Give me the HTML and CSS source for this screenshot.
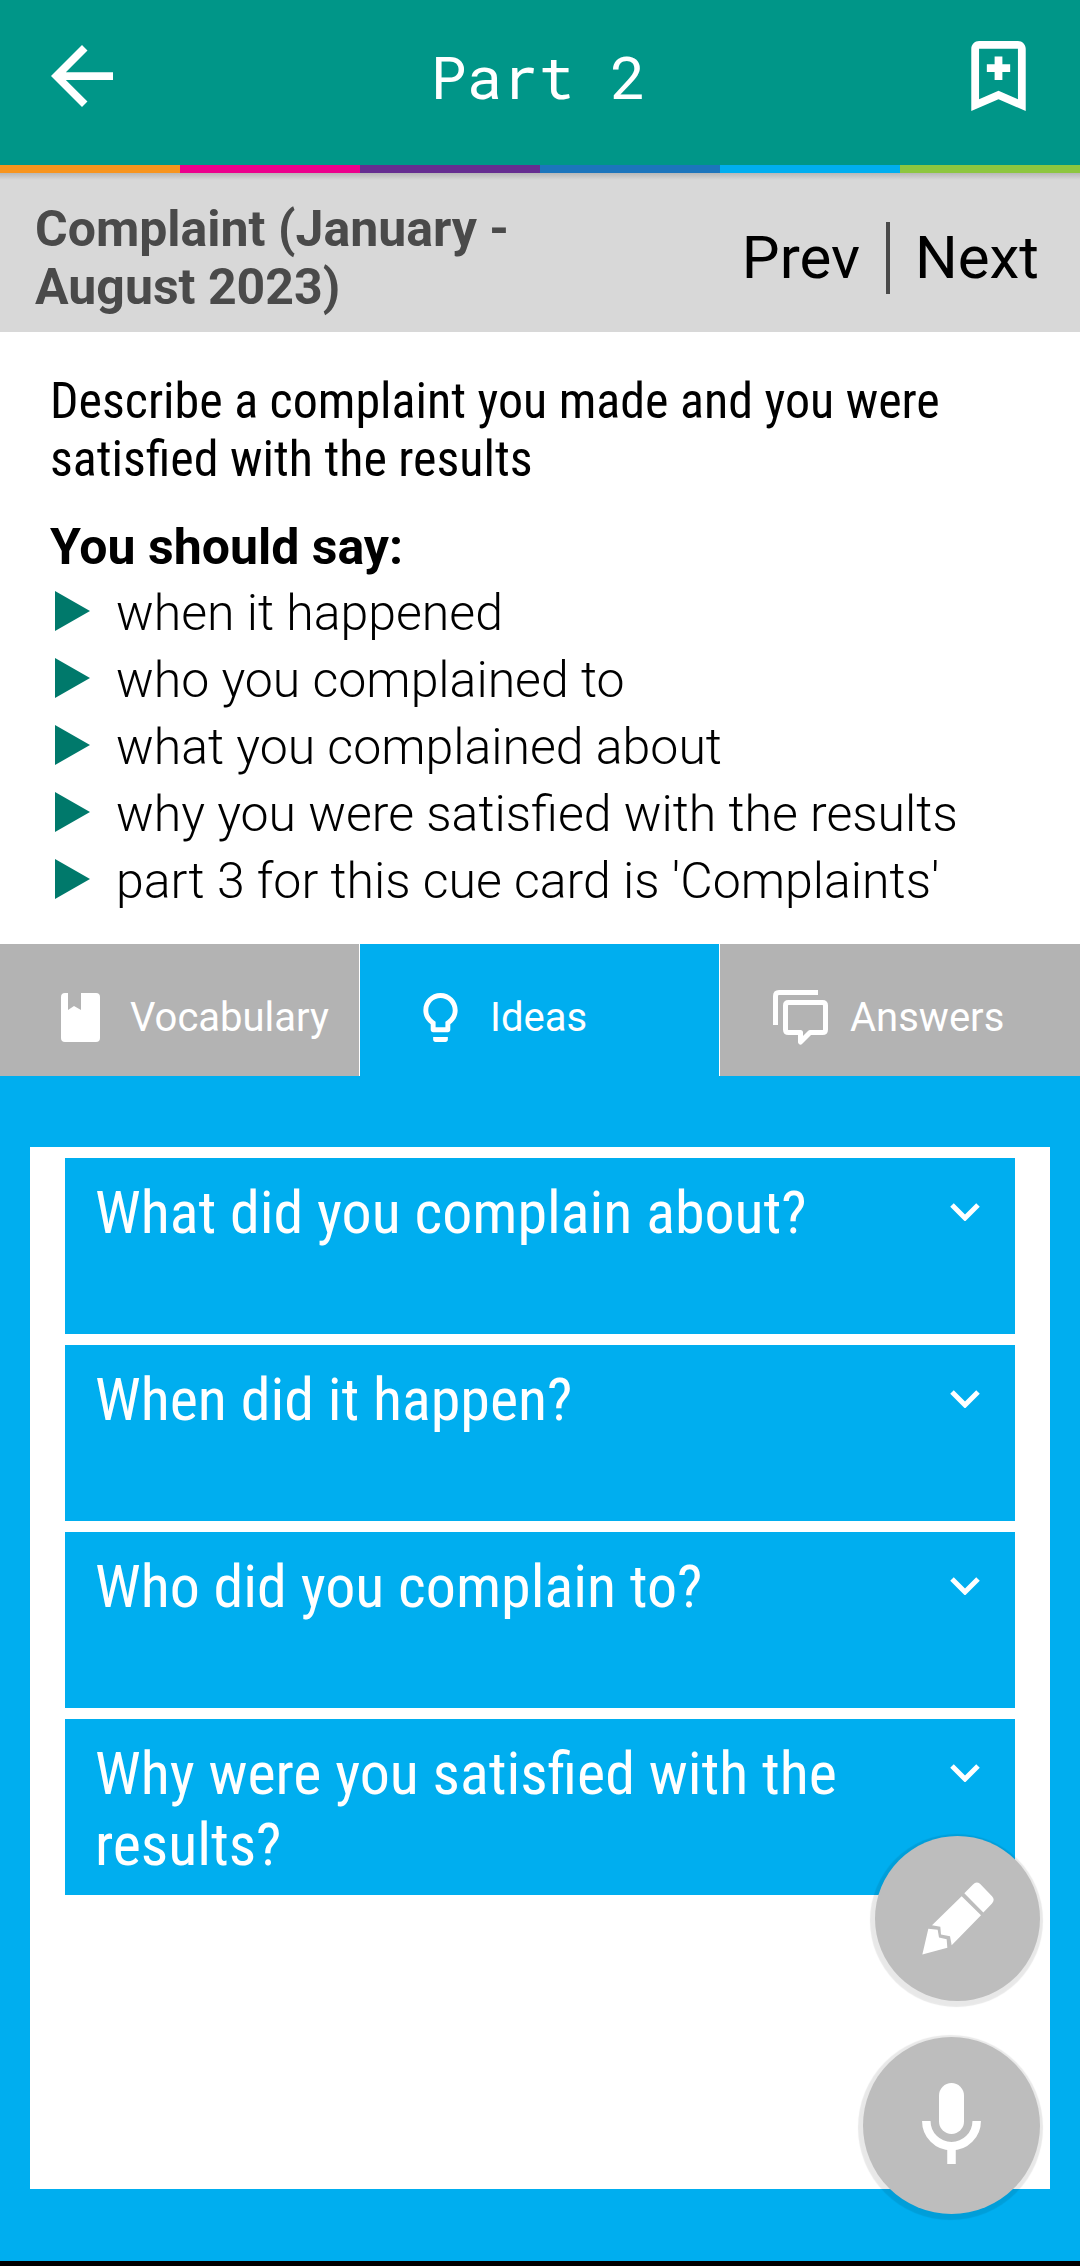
FILE: index.html
```html
<!DOCTYPE html>
<html lang="en">
<head>
<meta charset="utf-8">
<meta name="viewport" content="width=device-width, initial-scale=1">
<title>Part 2</title>
<link rel="stylesheet" href="styles.css">
</head>
<body>
<div class="app">
  <header class="topbar">
    <button class="icon-button" type="button" aria-label="Back">
      <svg width="62" height="62" viewBox="4 4 16 16" fill="currentColor"><path d="M20 11H7.83l5.59-5.59L12 4l-8 8 8 8 1.41-1.41L7.83 13H20v-2z"/></svg>
    </button>
    <h1 class="topbar-title">Part 2</h1>
    <button class="icon-button" type="button" aria-label="Add bookmark">
      <svg width="55" height="70" viewBox="5 3 14 18" fill="currentColor"><path d="M17 3H7c-1.100 0-2 .9-2 2v16l7-3 7 3V5c0-1.100-.9-2-2-2zm0 15l-5-2.180L7 18V5h10v13zM11 7h2v2h2v2h-2v2h-2v-2H9V9h2z"/></svg>
    </button>
  </header>
  <div class="stripes">
    <span class="orange"></span><span class="pink"></span><span class="purple"></span><span class="blue"></span><span class="sky"></span><span class="green"></span>
  </div>

  <section class="topic">
    <h2 class="topic-name">Complaint (January - August 2023)</h2>
    <nav class="pager">
      <a href="#prev">Prev</a>
      <a href="#next">Next</a>
    </nav>
  </section>

  <section class="cue">
    <p class="cue-task">Describe a complaint you made and you were satisfied with the results</p>
    <h3 class="cue-heading">You should say:</h3>
    <ul class="cue-list">
      <li>when it happened</li>
      <li>who you complained to</li>
      <li>what you complained about</li>
      <li>why you were satisfied with the results</li>
      <li>part 3 for this cue card is 'Complaints'</li>
    </ul>
  </section>

  <div class="tabs" role="tablist">
    <button class="tab" type="button" role="tab" aria-selected="false">
      <span class="tab-icon"><svg width="39" height="49" viewBox="0 0 39 49" fill="currentColor"><path d="M4 0h3v17l6-4 7 4V0h15q4 0 4 4v41q0 4-4 4H4q-4 0-4-4V4q0-4 4-4z"/></svg></span>
      Vocabulary
    </button>
    <button class="tab" type="button" role="tab" aria-selected="true">
      <span class="tab-icon"><svg width="35" height="49" viewBox="5 2 14 20" fill="currentColor"><path d="M9 21c0 .55.45 1 1 1h4c.55 0 1-.45 1-1v-1H9v1zm3-19C8.140 2 5 5.140 5 9c0 2.380 1.190 4.470 3 5.740V17c0 .55.45 1 1 1h6c.55 0 1-.45 1-1v-2.260c1.810-1.270 3-3.360 3-5.740 0-3.860-3.140-7-7-7zm2.850 11.100l-.85.6V16h-4v-2.300l-.85-.6C7.800 12.160 7 10.630 7 9c0-2.760 2.240-5 5-5s5 2.240 5 5c0 1.630-.8 3.160-2.150 4.100z"/></svg></span>
      Ideas
    </button>
    <button class="tab" type="button" role="tab" aria-selected="false">
      <span class="tab-icon"><svg width="55" height="55" viewBox="0 0 55 55" fill="none" stroke="currentColor" stroke-width="5"><path d="M2.500 35V6q0-3.500 3.500-3.500h39"/><path stroke-linejoin="round" d="M15.500 12.500h34q3 0 3 3v24q0 3-3 3H37l-9.500 9.500v-9.500h-12q-3 0-3-3v-24q0-3 3-3z"/></svg></span>
      Answers
    </button>
  </div>

  <main class="ideas" role="tabpanel">
    <div class="panel">
      <button class="idea" type="button" aria-expanded="false">
        <span>What did you complain about?</span>
        <svg class="chevron" viewBox="0 0 30 18"><path d="M2 2l13 13L28 2"/></svg>
      </button>
      <button class="idea" type="button" aria-expanded="false">
        <span>When did it happen?</span>
        <svg class="chevron" viewBox="0 0 30 18"><path d="M2 2l13 13L28 2"/></svg>
      </button>
      <button class="idea" type="button" aria-expanded="false">
        <span>Who did you complain to?</span>
        <svg class="chevron" viewBox="0 0 30 18"><path d="M2 2l13 13L28 2"/></svg>
      </button>
      <button class="idea" type="button" aria-expanded="false">
        <span>Why were you satisfied with the results?</span>
        <svg class="chevron" viewBox="0 0 30 18"><path d="M2 2l13 13L28 2"/></svg>
      </button>
    </div>
  </main>

  <div class="floating">
    <button class="fab fab-small" type="button" aria-label="Write">
      <svg width="72" height="73" viewBox="425 248 216 218" fill="currentColor"><path d="M426 465l18-77 28 3 4 23 23 5 2 26zM544 290l58 57-88 90-5-27-27-5-2-23-25-5zM552 281l26-26q10-11 21-2l36 37q10 11 0 22l-26 27z"/></svg>
    </button>
    <button class="fab" type="button" aria-label="Record">
      <svg width="59" height="81" viewBox="0 0 59 81" fill="none" stroke="currentColor"><rect x="17" width="25" height="51" rx="12.500" fill="currentColor" stroke="none"/><path stroke-width="8.500" d="M4.300 38a25.200 25.200 0 0 0 50.400 0M29.500 63v18"/></svg>
    </button>
  </div>
</div>
</body>
</html>
```
FILE: styles.css
```css
* {
  box-sizing: border-box;
}

body,
h1,
h2,
h3,
p,
ul {
  margin: 0;
  padding: 0;
}

body {
  font-family: Roboto, "Liberation Sans", sans-serif;
  font-size: 50px;
  color: #000;
  background: #fff;
}

button {
  margin: 0;
  border: 0;
  font: inherit;
  color: #fff;
  cursor: pointer;
}

svg {
  display: block;
  flex: none;
}

.app {
  position: relative;
  display: flex;
  flex-direction: column;
  min-height: 100vh;
  border-bottom: 5px solid #000;
}

/* Top bar */
.topbar {
  display: grid;
  grid-template-columns: 1fr auto 1fr;
  align-items: center;
  height: 165px;
  padding: 0 54px 13px 51px;
  background: #009688;
  color: #fff;
}

.icon-button {
  display: flex;
  justify-self: start;
  padding: 0;
  background: none;
}

.icon-button:last-child {
  justify-self: end;
}

.topbar-title {
  font-family: "Roboto Mono", "Liberation Mono", monospace;
  font-size: 60px;
  font-weight: 400;
  line-height: 80px;
}

.stripes {
  display: grid;
  grid-template-columns: repeat(6, 1fr);
  height: 8px;
}

.orange { background: #f7941d; }
.pink { background: #ec008c; }
.purple { background: #662d91; }
.blue { background: #1c75bc; }
.sky { background: #00aeef; }
.green { background: #8dc63f; }

/* Topic row */
.topic {
  display: flex;
  align-items: center;
  justify-content: space-between;
  padding: 27px 41px 16px 35px;
  background: linear-gradient(#b8b8b8, #d8d8d8 7px);
}

.topic-name {
  max-width: 520px;
  font-size: 50px;
  font-weight: 700;
  line-height: 58px;
  color: #4a4a4a;
}

.pager {
  display: flex;
  font-size: 60px;
  line-height: 72px;
}

.pager a {
  color: #000;
  text-decoration: none;
}

.pager a + a {
  margin-left: 26px;
  padding-left: 25px;
  border-left: 4px solid #4a4a4a;
}

/* Cue card */
.cue {
  padding: 40px 50px 29px;
}

.cue-task {
  font-family: "Roboto Condensed", Roboto, sans-serif;
  line-height: 58px;
}

.cue-heading {
  margin: 29px 0 3px;
  font-size: 50px;
  font-weight: 700;
  line-height: 60px;
}

.cue-list {
  list-style: none;
  font-weight: 300;
  line-height: 67px;
}

.cue-list li {
  display: flex;
  align-items: center;
  gap: 26px;
}

.cue-list li::before {
  content: "";
  margin: 0 0 5px 5px;
  border: solid transparent;
  border-width: 20px 0 20px 35px;
  border-left-color: #00796b;
}

/* Tabs */
.tabs {
  display: grid;
  grid-template-columns: repeat(3, 1fr);
  background: #b3b3b3;
}

.tab {
  display: flex;
  align-items: center;
  gap: 20px;
  height: 132px;
  padding: 14px 0 0 50px;
  border-right: 1px solid #fff;
  background: #b3b3b3;
  font-size: 40px;
}

.tab:last-child {
  border-right: 0;
}

.tab[aria-selected="true"] {
  background: #00aeef;
}

.tab-icon {
  display: flex;
  justify-content: center;
  width: 60px;
}

/* Ideas */
.ideas {
  display: flex;
  flex: 1;
  padding: 71px 30px 72px;
  background: #00aeef;
}

.panel {
  display: flex;
  flex: 1;
  flex-direction: column;
  gap: 11px;
  padding: 11px 35px;
  background: #fff;
}

.idea {
  display: flex;
  align-items: flex-start;
  justify-content: space-between;
  min-height: 176px;
  padding: 19px 35px 15px 30px;
  background: #00aeef;
  font-family: "Roboto Condensed", Roboto, sans-serif;
  font-size: 60px;
  line-height: 71px;
  text-align: left;
}

.idea span {
  max-width: 770px;
}

.chevron {
  width: 30px;
  height: 18px;
  margin-top: 26px;
  fill: none;
  stroke: currentColor;
  stroke-width: 5;
}

/* Floating actions */
.floating {
  position: absolute;
  right: 40px;
  bottom: 47px;
  display: flex;
  flex-direction: column;
  align-items: flex-end;
  gap: 36px;
}

.fab {
  display: flex;
  align-items: center;
  justify-content: center;
  width: 177px;
  height: 177px;
  padding: 0 0 4px;
  border-radius: 50%;
  background: #bdbdbd;
  box-shadow: -1px 2px 1px 4px rgba(0, 0, 0, 0.09);
}

.fab-small {
  width: 165px;
  height: 165px;
  padding: 0;
}
```
